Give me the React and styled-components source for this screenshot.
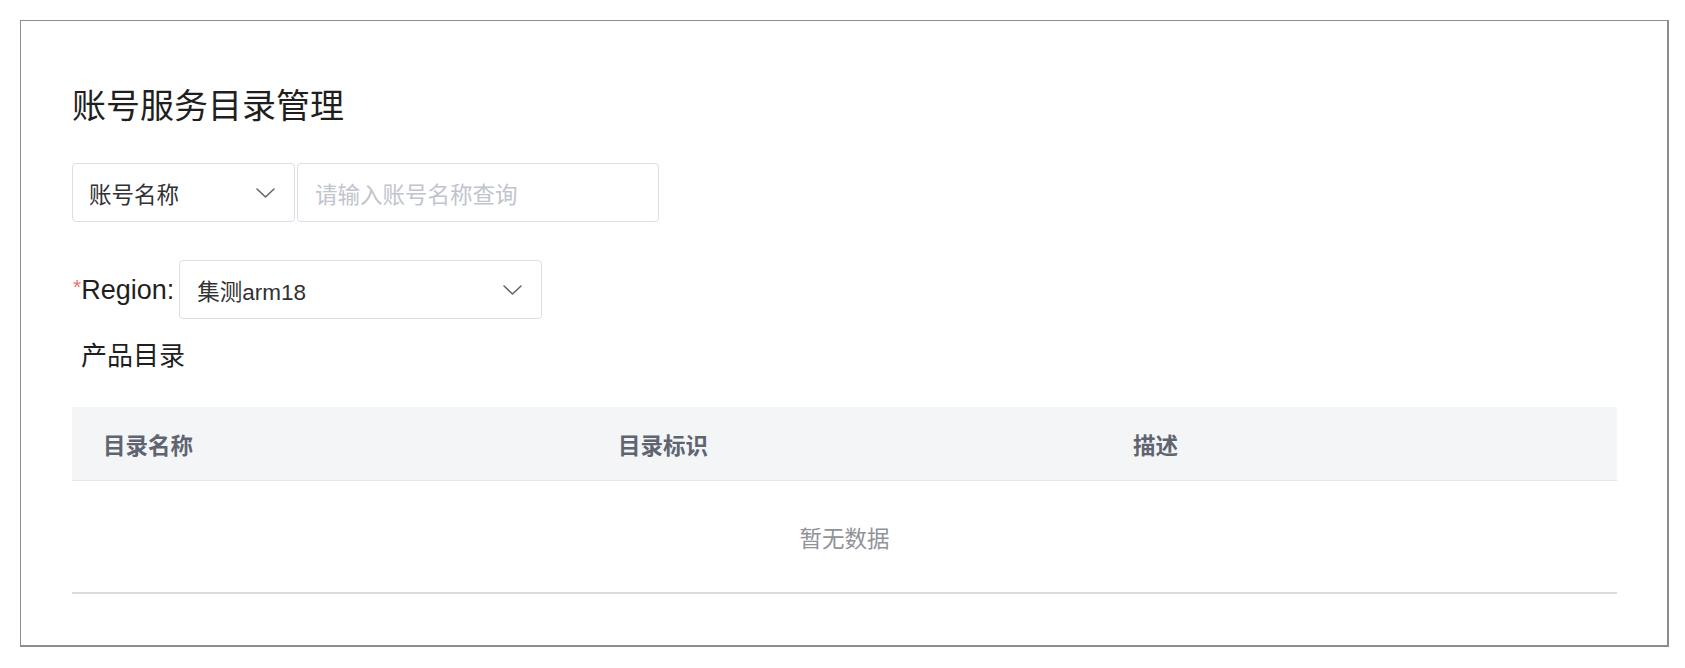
import React from "react";
import styled, { createGlobalStyle } from "styled-components";

const Global = createGlobalStyle`
  html, body { margin: 0; padding: 0; background: #ffffff; }
  body {
    font-family: "Liberation Sans", "Noto Sans CJK SC", Arial, sans-serif;
    color: #303133;
  }
  * { box-sizing: border-box; }
`;

const Frame = styled.div`
  width: 1649px;
  height: 627px;
  margin: 20px 0 0 20px;
  border: 1px solid #8d8d8d;
  border-right-width: 2px;
  border-bottom-width: 2px;
  padding: 65px 51px 0 51px;
  display: flex;
  flex-direction: column;
  background: #fff;
`;

const Title = styled.h1`
  margin: 0;
  font-size: 34px;
  line-height: 40px;
  font-weight: 400;
  color: #1f1f1f;
`;

const SearchRow = styled.div`
  display: flex;
  align-items: stretch;
  gap: 2px;
  margin-top: 37px;
  height: 59px;
`;

const SelectBox = styled.div`
  width: ${(p) => p.$w}px;
  height: 59px;
  border: 1px solid #dcdfe6;
  border-radius: 4px;
  display: flex;
  align-items: center;
  justify-content: space-between;
  padding: 0 19px 0 ${(p) => p.$pl || 16}px;
  font-size: 22.5px;
  color: #303133;
  background: #fff;
`;

const InputBox = styled.div`
  width: 362px;
  height: 59px;
  border: 1px solid #dcdfe6;
  border-radius: 4px;
  display: flex;
  align-items: center;
  padding: 0 17px;
  font-size: 22.5px;
  color: #c0c4cc;
`;

const RegionRow = styled.div`
  display: flex;
  align-items: center;
  margin-top: 38px;
  gap: 5px;
`;

const Label = styled.label`
  font-size: 27px;
  line-height: 32px;
  color: #1f1f1f;
  display: flex;
  align-items: flex-start;
  margin-left: 1px;
`;

const Star = styled.span`
  color: #f56c6c;
  font-size: 21px;
  line-height: 21px;
  margin-top: 2px;
`;

const SectionTitle = styled.div`
  margin-top: 19px;
  padding-left: 9px;
  font-size: 26px;
  line-height: 36px;
  color: #1f1f1f;
`;

const Table = styled.div`
  margin-top: 33px;
  width: 1545px;
  border-bottom: 2px solid #dadce2;
`;

const HeadRow = styled.div`
  display: grid;
  grid-template-columns: 515px 515px 515px;
  height: 74px;
  background: #f4f5f7;
  border-bottom: 1px solid #e4e7ed;
`;

const HeadCell = styled.div`
  display: flex;
  align-items: center;
  padding-left: 31px;
  font-size: 22.5px;
  font-weight: 700;
  color: #5f6570;
`;

const Empty = styled.div`
  height: 111px;
  display: flex;
  align-items: center;
  justify-content: center;
  font-size: 22.5px;
  color: #909399;
`;

const Chevron = () => (
  <svg width="19" height="10" viewBox="0 0 19 10" fill="none">
    <polyline points="1,1 9.5,9 18,1" stroke="#606266" strokeWidth="1.5" strokeLinejoin="round" strokeLinecap="round" />
  </svg>
);

export default function App() {
  return (
    <>
      <Global />
      <Frame>
        <Title>账号服务目录管理</Title>
        <SearchRow>
          <SelectBox $w={223}>
            <span>账号名称</span>
            <Chevron />
          </SelectBox>
          <InputBox>请输入账号名称查询</InputBox>
        </SearchRow>
        <RegionRow>
          <Label>
            <Star>*</Star>Region:
          </Label>
          <SelectBox $w={363} $pl={17}>
            <span>集测arm18</span>
            <Chevron />
          </SelectBox>
        </RegionRow>
        <SectionTitle>产品目录</SectionTitle>
        <Table>
          <HeadRow>
            <HeadCell>目录名称</HeadCell>
            <HeadCell>目录标识</HeadCell>
            <HeadCell>描述</HeadCell>
          </HeadRow>
          <Empty>暂无数据</Empty>
        </Table>
      </Frame>
    </>
  );
}
